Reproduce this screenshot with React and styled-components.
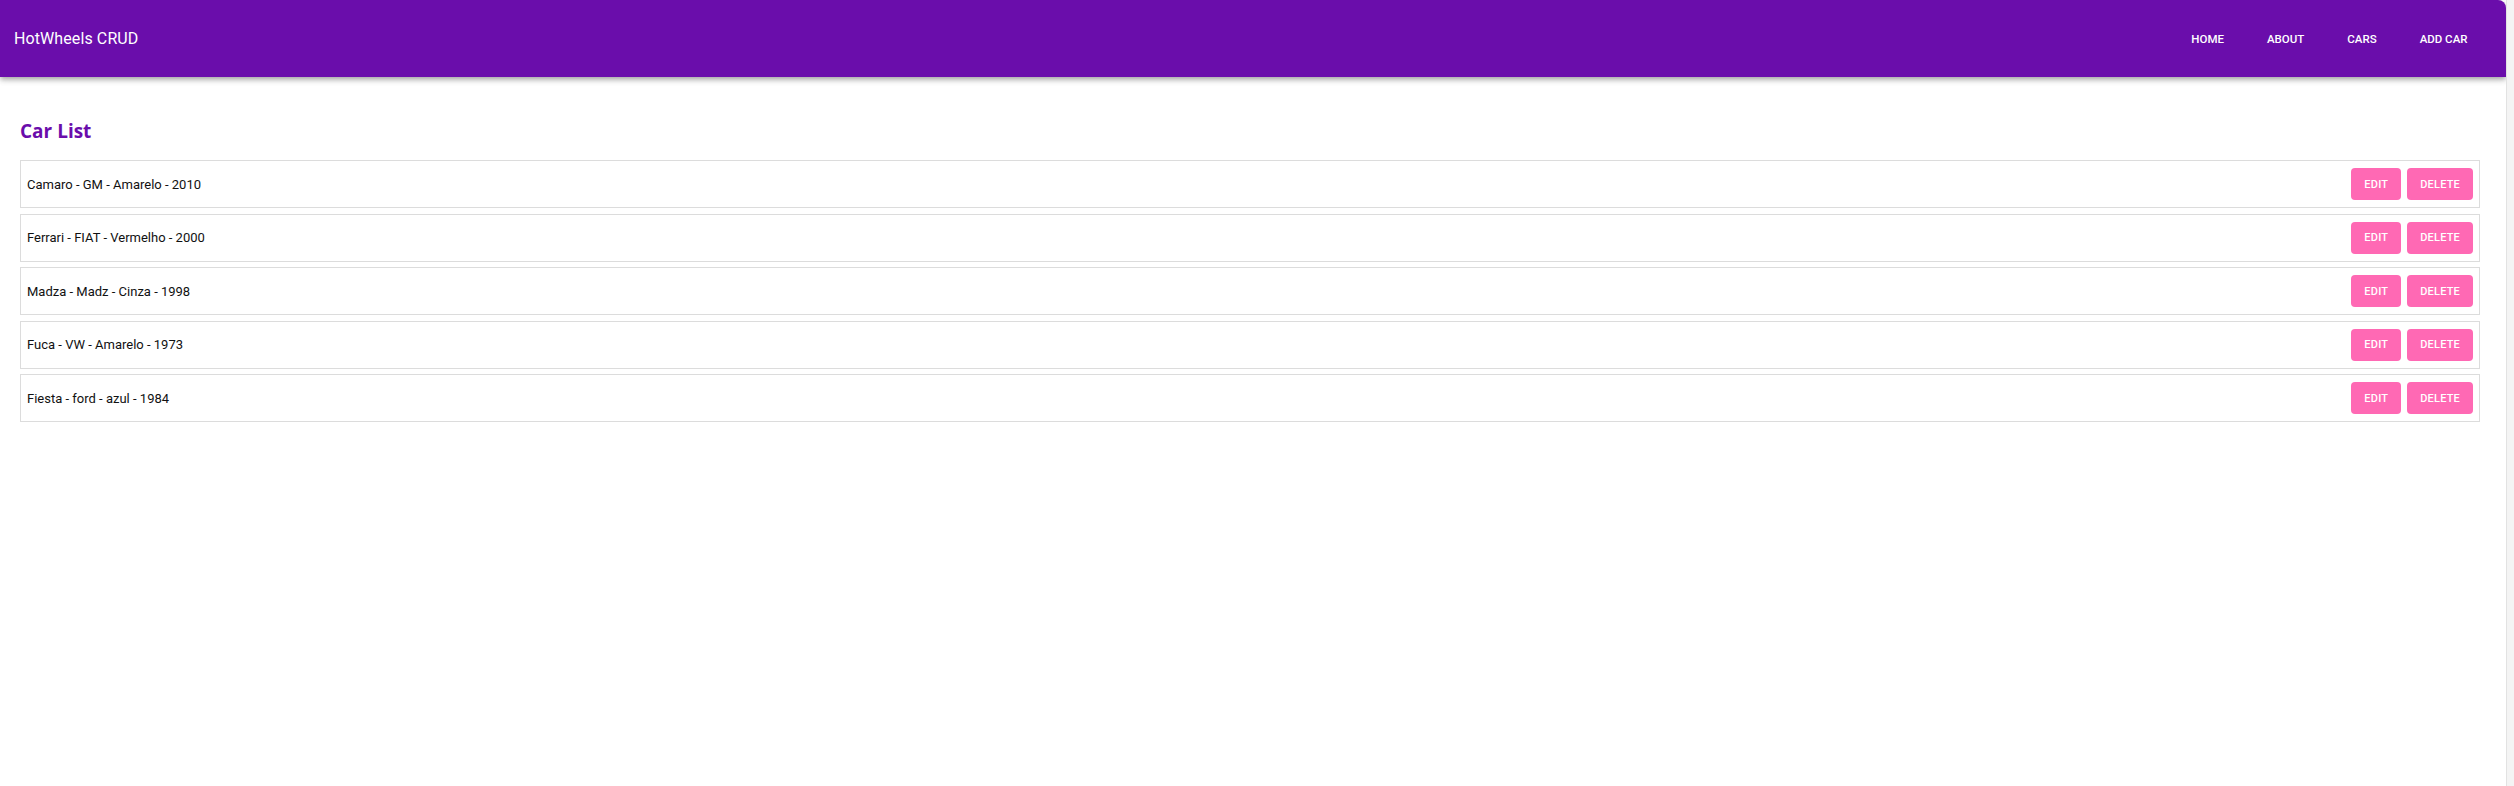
import React from 'react';
import styled, { createGlobalStyle } from 'styled-components';

const GlobalStyle = createGlobalStyle`
html, body {
  margin: 0;
  overflow: hidden;
}
body {
  background: #fff;
  font-family: Roboto, "Liberation Sans", sans-serif;
}
`

const Shell = styled.div`
display: flex;
height: 100vh;
`

const Page = styled.div`
flex: 1;
min-width: 0;
`

const ScrollTrack = styled.div`
width: 7px;
flex-shrink: 0;
background: #f4f4f4;
border-left: 1px solid #e2e2e2;
`

const AppBar = styled.header`
height: 77px;
background-color: #6a0dab;
color: #fff;
border-top-right-radius: 8px;
box-shadow: 0 2px 4px -1px rgba(0, 0, 0, 0.2), 0 4px 5px 0 rgba(0, 0, 0, 0.14), 0 1px 10px 0 rgba(0, 0, 0, 0.12);
display: flex;
align-items: center;
justify-content: space-between;
padding: 0 17px 0 14px;
`

const Brand = styled.div`
font-size: 16px;
font-weight: 400;
letter-spacing: 0.1px;
`

const Nav = styled.nav`
display: flex;
align-items: center;
`

const NavButton = styled.a`
font-size: 11.5px;
font-weight: 500;
text-transform: uppercase;
color: #fff;
padding: 10px 21.5px;
cursor: pointer;
`

const Main = styled.main`
padding: 43px 26px 20px 20px;
`

const Title = styled.h2`
margin: 0 0 17px 0;
font-family: "Open Sans", "Noto Sans", sans-serif;
font-size: 19px;
line-height: 23px;
font-weight: 700;
color: #6a0dab;
`

const List = styled.ul`
list-style: none;
margin: 0;
padding: 0;
`

const Row = styled.li`
box-sizing: border-box;
height: 48px;
margin-bottom: 5.5px;
border: 1px solid #dcdcdc;
padding: 0 6px;
display: flex;
align-items: center;
justify-content: space-between;
`

const CarText = styled.span`
font-size: 13px;
color: #111;
`

const Actions = styled.div`
display: flex;
gap: 6px;
`

const ActionButton = styled.button`
height: 32px;
padding: 0 13px;
border: none;
border-radius: 4px;
background-color: #ff69b4;
color: #fff;
font-family: Roboto, "Liberation Sans", sans-serif;
font-size: 11px;
font-weight: 500;
letter-spacing: 0.2px;
text-transform: uppercase;
cursor: pointer;
`

const cars = [
  { name: 'Camaro', brand: 'GM', color: 'Amarelo', year: 2010 },
  { name: 'Ferrari', brand: 'FIAT', color: 'Vermelho', year: 2000 },
  { name: 'Madza', brand: 'Madz', color: 'Cinza', year: 1998 },
  { name: 'Fuca', brand: 'VW', color: 'Amarelo', year: 1973 },
  { name: 'Fiesta', brand: 'ford', color: 'azul', year: 1984 },
];

const App = () => {
  return (
    <Shell>
      <GlobalStyle />
      <Page>
        <AppBar>
          <Brand>HotWheels CRUD</Brand>
          <Nav>
            <NavButton>Home</NavButton>
            <NavButton>About</NavButton>
            <NavButton>Cars</NavButton>
            <NavButton>Add Car</NavButton>
          </Nav>
        </AppBar>
        <Main>
          <Title>Car List</Title>
          <List>
            {cars.map((car) => (
              <Row key={car.name}>
                <CarText>{car.name} - {car.brand} - {car.color} - {car.year}</CarText>
                <Actions>
                  <ActionButton>Edit</ActionButton>
                  <ActionButton>Delete</ActionButton>
                </Actions>
              </Row>
            ))}
          </List>
        </Main>
      </Page>
      <ScrollTrack />
    </Shell>
  );
};

export default App;
